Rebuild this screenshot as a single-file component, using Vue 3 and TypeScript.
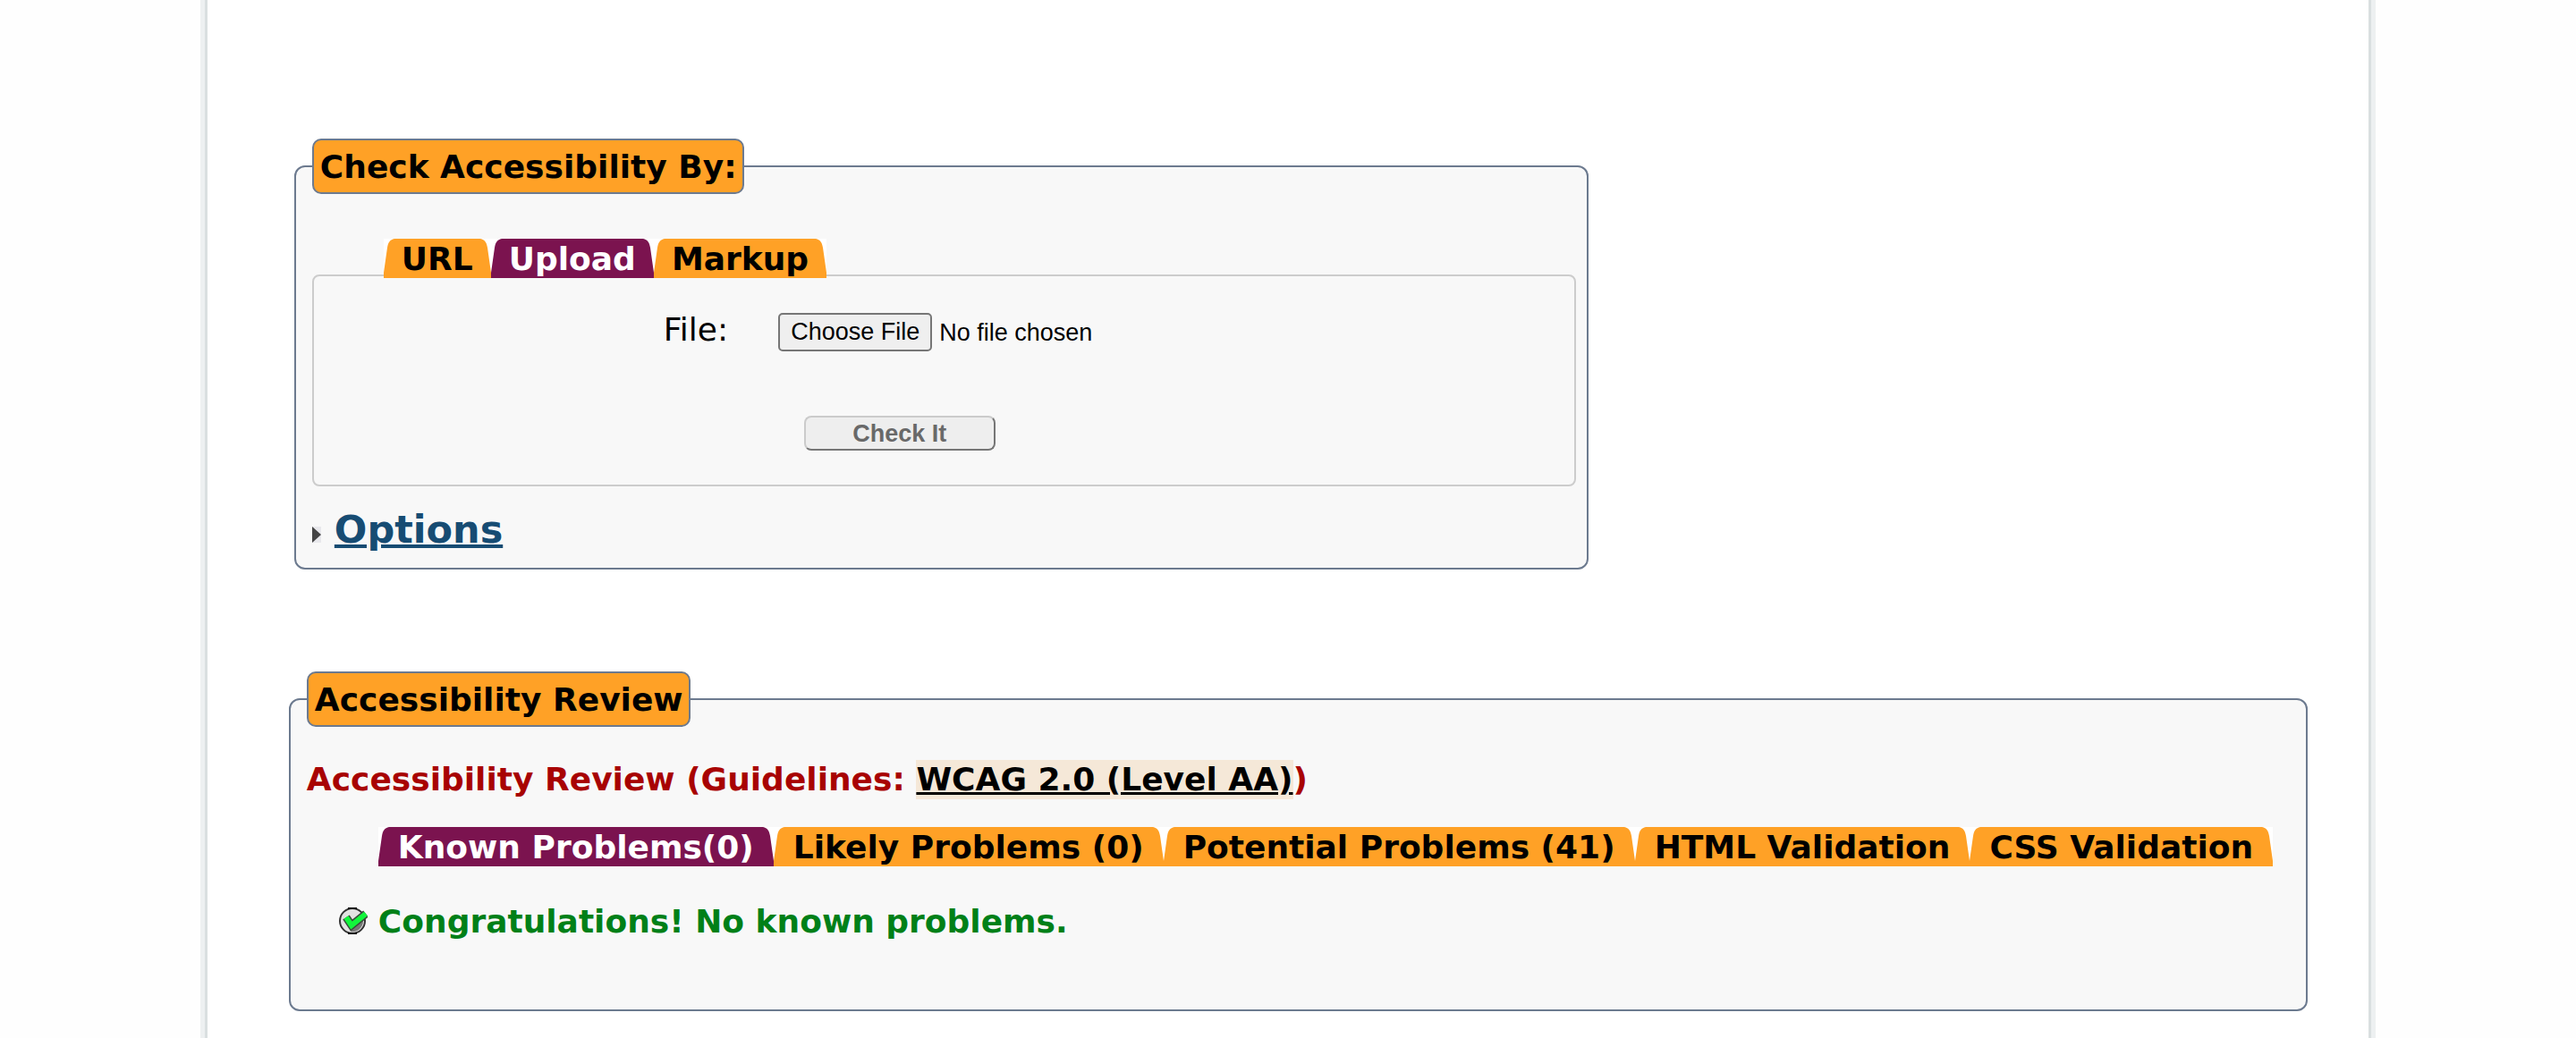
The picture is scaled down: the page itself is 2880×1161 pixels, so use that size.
<script setup lang="ts">
import { ref } from 'vue'

interface Tab {
  id: string
  label: string
}

const inputTabs: Tab[] = [
  { id: 'url', label: 'URL' },
  { id: 'upload', label: 'Upload' },
  { id: 'markup', label: 'Markup' },
]
const resultTabs: Tab[] = [
  { id: 'known', label: 'Known Problems(0)' },
  { id: 'likely', label: 'Likely Problems (0)' },
  { id: 'potential', label: 'Potential Problems (41)' },
  { id: 'html', label: 'HTML Validation' },
  { id: 'css', label: 'CSS Validation' },
]

const activeInput = ref('upload')
const activeResult = ref('known')
</script>

<template>
  <main class="page">
    <form class="checker" @submit.prevent>
      <fieldset class="group">
        <legend>Check Accessibility By:</legend>
        <nav class="tabs">
          <button
            v-for="tab in inputTabs"
            :key="tab.id"
            type="button"
            class="tab"
            :class="{ active: tab.id === activeInput }"
            @click="activeInput = tab.id"
          >
            <svg class="corner left" viewBox="0 0 12 44"><path d="M0 0H12C7 1 5 4 4 10L0 38Z" /></svg>
            {{ tab.label }}
            <svg class="corner right" viewBox="0 0 12 44"><path d="M12 0H0C5 1 7 4 8 10L12 38Z" /></svg>
          </button>
        </nav>
        <div class="panel">
          <div class="file-row">
            <label for="upload-file">File:</label>
            <input id="upload-file" type="file" />
          </div>
          <button type="submit" class="submit">Check It</button>
        </div>
        <div class="options">
          <svg class="arrow" viewBox="0 0 10 18"><path class="arrow-bg" d="M0 0H10V18H0Z" /><path d="M0 0L10 9L0 18Z" /></svg>
          <a href="#options">Options</a>
        </div>
      </fieldset>
    </form>

    <section class="results">
      <fieldset class="group">
        <legend>Accessibility Review</legend>
        <h3>Accessibility Review (Guidelines: <a href="#wcag">WCAG 2.0 (Level AA)</a>)</h3>
        <nav class="tabs">
          <button
            v-for="tab in resultTabs"
            :key="tab.id"
            type="button"
            class="tab"
            :class="{ active: tab.id === activeResult }"
            @click="activeResult = tab.id"
          >
            <svg class="corner left" viewBox="0 0 12 44"><path d="M0 0H12C7 1 5 4 4 10L0 38Z" /></svg>
            {{ tab.label }}
            <svg class="corner right" viewBox="0 0 12 44"><path d="M12 0H0C5 1 7 4 8 10L12 38Z" /></svg>
          </button>
        </nav>
        <p class="congrats">
          <svg class="check" viewBox="0 0 32 32">
            <circle cx="15" cy="15" r="14" fill="#e2e2e2" stroke="#333" stroke-width="2" />
            <path d="M10 1H20M10 29H20" stroke="#000" stroke-width="2" />
            <path d="M27 15A12 12 0 0 1 13 27L15 22L26 11Z" fill="#777" />
            <path d="M8 11L14 20L30 7" fill="none" stroke="#3a4a3a" stroke-width="9" />
            <path d="M8 11L14 20L30 7" fill="none" stroke="#12f53c" stroke-width="6" />
          </svg>
          Congratulations! No known problems.
        </p>
      </fieldset>
    </section>
  </main>
</template>

<style>
body {
  margin: 0;
  background: #fefefe;
}
</style>

<style scoped>
.page {
  box-sizing: border-box;
  width: 83.9%;
  min-height: 100vh;
  margin: 0 auto;
  padding: 155px 68px 30px 91px;
  background: #fff;
  box-shadow: 0 0 0 3px #d9dfe0, 0 0 0 8px #edf0f1;
  font: 36px/44px Verdana, "DejaVu Sans", sans-serif;
  color: #000;
}
.checker {
  width: 64.1%;
  padding-left: 6px;
}
.group {
  box-sizing: border-box;
  min-width: 0;
  margin: 0;
  padding: 0 12px 0 18px;
  border: 2px solid #6c7a8f;
  border-radius: 12px;
  background: #f8f8f8;
}
legend {
  padding: 8px 6px 6px 7px;
  border: 2px solid #6c7a8f;
  border-radius: 10px;
  background: #ffa126;
  font-weight: bold;
}
.tabs {
  position: relative;
  display: flex;
  padding-left: 80px;
}
.tab {
  position: relative;
  height: 44px;
  padding: 0 20px;
  border: 0;
  background: #ffa126;
  font: inherit;
  font-weight: bold;
  line-height: 46px;
  color: #000;
  white-space: nowrap;
}
.results .tab {
  padding: 0 22px;
}
.tab.active {
  background: #7b134f;
  color: #fff;
}
.corner {
  position: absolute;
  top: 0;
  width: 12px;
  height: 44px;
  fill: #fff;
}
.left {
  left: 0;
}
.right {
  right: 0;
}
.checker .tabs {
  margin-top: 50px;
}
.panel {
  margin-top: -4px;
  padding: 38px 0;
  border: 2px solid #ccc;
  border-radius: 8px;
}
.file-row {
  display: flex;
  align-items: center;
}
.file-row label {
  box-sizing: border-box;
  width: 37%;
  padding: 0 58px 4px 0;
  text-align: right;
}
input[type="file"] {
  margin-left: -2px;
  font: 27px/30px Arial, "Liberation Sans", sans-serif;
}
input::file-selector-button {
  height: 43px;
  margin: 0 8px 0 0;
  padding: 0 12px;
  border: 2px solid #767676;
  border-radius: 5px;
  background: #efefef;
  font: inherit;
  color: #000;
}
.submit {
  display: block;
  width: 214px;
  height: 39px;
  margin: 70px 0 0 548px;
  padding: 0;
  border: 2px solid;
  border-color: #cbcbcb #767676 #767676 #cbcbcb;
  border-radius: 8px;
  background: #eee;
  font: bold 27px/34px Arial, "Liberation Sans", sans-serif;
  color: #696969;
}
.options {
  display: flex;
  align-items: baseline;
  gap: 15px;
  padding: 22px 0 17px;
  font-size: 43px;
  line-height: 52px;
}
.arrow {
  width: 10px;
  height: 18px;
  fill: #444;
}
.arrow-bg {
  fill: #e8e8ec;
}
.options a {
  font-weight: bold;
  color: #174c73;
  text-decoration-thickness: 4px;
}
.results {
  margin-top: 114px;
}
h3 {
  margin: 37px 0 31px;
  font-size: 36px;
  line-height: 44px;
  color: #a80303;
}
h3 a {
  display: inline-block;
  background: #f5e8d8;
  color: #000;
  text-decoration-thickness: 3px;
}
.congrats {
  display: flex;
  align-items: center;
  gap: 12px;
  margin: 40px 0 76px 36px;
  font-weight: bold;
  color: #008018;
}
.check {
  width: 32px;
  height: 32px;
}
</style>
